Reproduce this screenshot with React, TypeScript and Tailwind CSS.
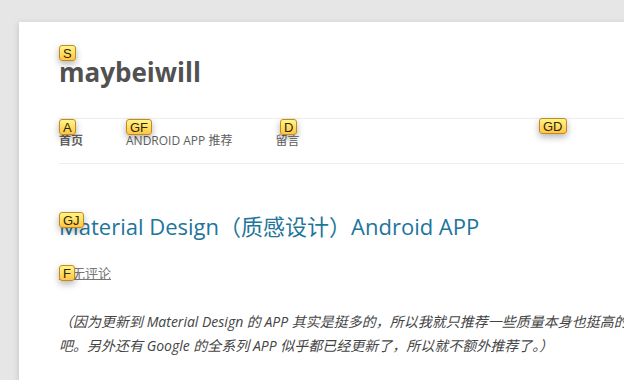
const hints = [
  { label: 'S', left: 'left-[59px]', top: 'top-[45px]' },
  { label: 'A', left: 'left-[59px]', top: 'top-[119px]' },
  { label: 'GF', left: 'left-[126px]', top: 'top-[119px]' },
  { label: 'D', left: 'left-[280px]', top: 'top-[119px]' },
  { label: 'GD', left: 'left-[539px]', top: 'top-[118px]' },
  { label: 'GJ', left: 'left-[59px]', top: 'top-[212px]' },
  { label: 'F', left: 'left-[59px]', top: 'top-[265px]' },
];

const navItems = [
  { label: '首页', current: true },
  { label: 'ANDROID APP 推荐', current: false },
  { label: '留言', current: false },
];

function HintBadge({ label, left, top }: { label: string; left: string; top: string }) {
  return (
    <span
      className={`absolute ${left} ${top} flex h-[16px] min-w-[16px] items-center justify-center rounded-[3px] border border-[#c38a22] bg-gradient-to-b from-[#fff785] to-[#ffc542] px-[3px] text-[13px] leading-none text-[#302505] shadow-[0_3px_7px_rgba(0,0,0,0.3)]`}
      style={{ fontFamily: '"Liberation Sans", Arial, sans-serif' }}
    >
      {label}
    </span>
  );
}

export default function App() {
  return (
    <div
      className="relative h-[380px] overflow-hidden bg-[#e6e6e6]"
      style={{ fontFamily: '"Open Sans", "Noto Sans CJK SC", sans-serif' }}
    >
      <div className="ml-[19px] mt-[22px] w-[960px] bg-white px-[40px] pb-10 shadow-[0_2px_6px_rgba(100,100,100,0.3)]">
        <header className="pt-[26px]">
          <h1 className="text-[26px] font-bold leading-[48px] text-[#515151]">maybeiwill</h1>
          <nav className="mt-[22px] border-y border-[#ededed]">
            <ul className="flex h-[44px] items-center gap-[43px] text-[12px] text-[#5e5e5e]">
              {navItems.map((item) => (
                <li key={item.label} className={item.current ? 'font-bold text-[#636363]' : ''}>
                  {item.label}
                </li>
              ))}
            </ul>
          </nav>
        </header>

        <article className="pt-[47px]">
          <h2 className="text-[22px] leading-[30px] text-[#21759b]">
            Material Design（质感设计）Android APP
          </h2>
          <div className="mt-[22px] text-[13px] leading-[20px]">
            <a className="text-[#777] underline">暂无评论</a>
          </div>
          <p className="mt-[27px] whitespace-nowrap text-[14px] italic leading-[24px] text-[#444]">
            （因为更新到 Material Design 的 APP 其实是挺多的，所以我就只推荐一些质量本身也挺高的 APP
            <br />
            吧。另外还有 Google 的全系列 APP 似乎都已经更新了，所以就不额外推荐了。）
          </p>
        </article>
      </div>

      {hints.map((h) => (
        <HintBadge key={h.label} {...h} />
      ))}
    </div>
  );
}
